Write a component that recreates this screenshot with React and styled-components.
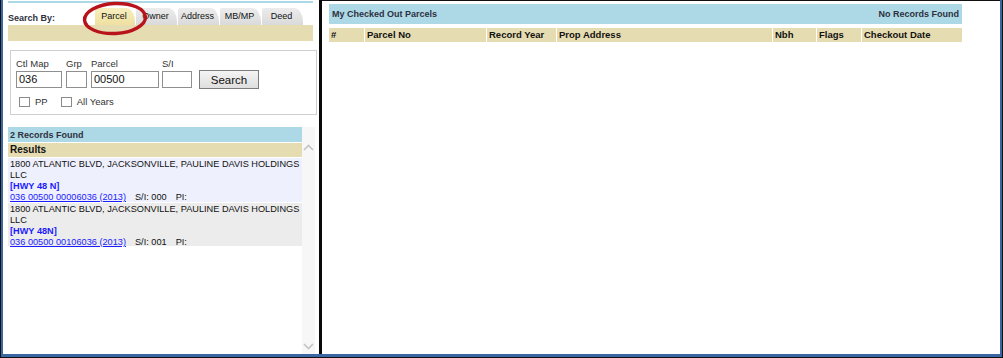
import styled, { createGlobalStyle } from "styled-components";

const GlobalStyle = createGlobalStyle`
  html, body {
    margin: 0;
    padding: 0;
    background: #fff;
  }
  body {
    font-family: "Liberation Sans", Arial, sans-serif;
  }
`;

const Frame = styled.div`
  width: 1003px;
  height: 358px;
  box-sizing: border-box;
  border-left: 1px solid #111;
  border-right: 1px solid #111;
  border-bottom: 1px solid #111;
`;

const Inner = styled.div`
  height: 100%;
  box-sizing: border-box;
  border-left: 2px solid #3b66a4;
  border-right: 2px solid #3b66a4;
  border-bottom: 3px solid #3b66a4;
  display: flex;
`;

const LeftPanel = styled.div`
  width: 316px;
  flex: none;
  box-sizing: border-box;
  padding-left: 5px;
  display: flex;
  flex-direction: column;
  position: relative;
`;

const Divider = styled.div`
  width: 3px;
  flex: none;
  background: #0a0a0a;
`;

const RightPanel = styled.div`
  flex: 1;
  border-top: 1px solid #111;
  padding: 3px 0 0 7px;
`;

const TopLine = styled.div`
  margin-top: 1px;
  width: 305px;
  height: 2px;
  background: #add8e6;
`;

const TabRow = styled.div`
  margin-top: 4px;
  height: 18px;
  width: 305px;
  display: flex;
  align-items: flex-end;
`;

const SearchLabel = styled.div`
  width: 87px;
  font-size: 9px;
  font-weight: bold;
  color: #2e3140;
  padding-bottom: 2px;
`;

const Tab = styled.div`
  width: ${(p) => p.$w}px;
  height: 17px;
  margin-right: 1px;
  box-sizing: border-box;
  border-top-right-radius: 9px 14px;
  border-top-left-radius: 2px;
  font-size: 9px;
  color: #111;
  display: flex;
  justify-content: center;
  align-items: flex-start;
  padding-top: 3px;
  padding-right: 2px;
  background: ${(p) =>
    p.$active
      ? "linear-gradient(#f7efbf, #efe0a0)"
      : "linear-gradient(#ececec, #dadada)"};
`;

const TabBar = styled.div`
  width: 305px;
  height: 16px;
  background: #e6dcb1;
`;

const Highlight = styled.svg`
  position: absolute;
  left: 79px;
  top: 1px;
`;

const FormBox = styled.div`
  margin: 9px 0 0 2px;
  width: 307px;
  height: 65px;
  box-sizing: border-box;
  border: 1px solid #cfcfcf;
  padding: 7px 0 0 5px;
`;

const FieldRow = styled.div`
  display: flex;
  align-items: flex-end;
`;

const Field = styled.div`
  display: flex;
  flex-direction: column;
  margin-right: ${(p) => p.$gap}px;
`;

const FieldLabel = styled.span`
  font-size: 9.5px;
  color: #333;
  height: 13px;
  line-height: 11px;
`;

const TextBox = styled.div`
  width: ${(p) => p.$w}px;
  height: 17px;
  box-sizing: border-box;
  border: 1px solid #8f8f8f;
  font-size: 11px;
  line-height: 15px;
  padding-left: 2px;
  color: #111;
`;

const SearchButton = styled.div`
  width: 60px;
  height: 19px;
  box-sizing: border-box;
  border: 1px solid #7d7d7d;
  background: linear-gradient(#f4f4f4, #dedede);
  font-size: 11.5px;
  color: #111;
  display: flex;
  align-items: center;
  justify-content: center;
  margin-bottom: -1px;
`;

const CheckRow = styled.div`
  display: flex;
  align-items: center;
  margin: 8px 0 0 3px;
  font-size: 9.5px;
  color: #333;
`;

const CheckBox = styled.span`
  width: 11px;
  height: 10px;
  box-sizing: border-box;
  border: 1px solid #8a8a8a;
  background: #fff;
  margin-right: 5px;
`;

const CheckText = styled.span`
  margin-right: ${(p) => p.$gap}px;
`;

const Results = styled.div`
  margin-top: 12px;
  width: 307px;
  flex: 1;
  display: flex;
`;

const ResultList = styled.div`
  width: 294px;
  flex: none;
`;

const Scrollbar = styled.div`
  width: 13px;
  background: #f7f7f7;
  display: flex;
  flex-direction: column;
  justify-content: space-between;
  align-items: center;
  padding: 17px 0 4px;
`;

const BlueHead = styled.div`
  height: ${(p) => p.$h}px;
  background: #add8e6;
  font-size: 9px;
  font-weight: bold;
  color: #2e3140;
  display: flex;
  align-items: center;
  justify-content: space-between;
  padding: 0 ${(p) => p.$pad}px;
`;

const TanHead = styled.div`
  margin-top: 1px;
  height: 14px;
  background: #e6dcb1;
  font-size: 10px;
  font-weight: bold;
  color: #111;
  padding-left: 2px;
  line-height: 14px;
`;

const ResultRow = styled.div`
  margin-top: 1px;
  height: ${(p) => p.$h}px;
  box-sizing: border-box;
  background: ${(p) => p.$bg};
  padding: 1px 2px 0;
  font-size: 9.2px;
  line-height: 10.6px;
  color: #111;
`;

const Street = styled.div`
  color: #1c1cff;
  font-weight: bold;
  margin-top: 1px;
`;

const ParcelLink = styled.a`
  color: #1c1cff;
  text-decoration: underline;
  margin-right: 9px;
`;

const Gap = styled.span`
  margin-right: 9px;
`;

const TableHead = styled.div`
  margin-top: 4px;
  width: 633px;
  display: grid;
  grid-template-columns: 35px 121px 69px 215px 43px 44px 100px;
  column-gap: 1px;
`;

const HeadCell = styled.div`
  height: 14px;
  background: #e6dcb1;
  font-size: 9.5px;
  font-weight: bold;
  color: #111;
  line-height: 14px;
  padding-left: 2px;
`;

const Chevron = ({ up }) => (
  <svg width="11" height="7" viewBox="0 0 11 7">
    <path
      d={up ? "M1 6 L5.5 1.5 L10 6" : "M1 1 L5.5 5.5 L10 1"}
      fill="none"
      stroke="#c4c4c4"
      strokeWidth="1.6"
    />
  </svg>
);

const tabs = [
  { label: "Parcel", w: 40, active: true },
  { label: "Owner", w: 41 },
  { label: "Address", w: 41 },
  { label: "MB/MP", w: 41 },
  { label: "Deed", w: 41 },
];

const results = [
  { street: "[HWY 48 N]", link: "036 00500 00006036 (2013)", si: "000", bg: "#eef0fd", h: 44 },
  { street: "[HWY 48N]", link: "036 00500 00106036 (2013)", si: "001", bg: "#ececec", h: 43 },
];

const columns = ["#", "Parcel No", "Record Year", "Prop Address", "Nbh", "Flags", "Checkout Date"];

const App = () => {
  return (
    <>
      <GlobalStyle />
      <Frame>
        <Inner>
          <LeftPanel>
            <TopLine />
            <TabRow>
              <SearchLabel>Search By:</SearchLabel>
              {tabs.map((t) => (
                <Tab key={t.label} $w={t.w} $active={t.active}>
                  {t.label}
                </Tab>
              ))}
            </TabRow>
            <TabBar />
            <Highlight width="66" height="35" viewBox="0 0 66 35">
              <ellipse
                cx="33"
                cy="17.5"
                rx="30.5"
                ry="15"
                fill="none"
                stroke="#b8121b"
                strokeWidth="3.4"
                transform="rotate(-3 33 17.5)"
              />
            </Highlight>

            <FormBox>
              <FieldRow>
                <Field $gap={4}>
                  <FieldLabel>Ctl Map</FieldLabel>
                  <TextBox $w={46}>036</TextBox>
                </Field>
                <Field $gap={4}>
                  <FieldLabel>Grp</FieldLabel>
                  <TextBox $w={21} />
                </Field>
                <Field $gap={3}>
                  <FieldLabel>Parcel</FieldLabel>
                  <TextBox $w={68}>00500</TextBox>
                </Field>
                <Field $gap={7}>
                  <FieldLabel>S/I</FieldLabel>
                  <TextBox $w={30} />
                </Field>
                <SearchButton>Search</SearchButton>
              </FieldRow>
              <CheckRow>
                <CheckBox />
                <CheckText $gap={13}>PP</CheckText>
                <CheckBox />
                <CheckText $gap={0}>All Years</CheckText>
              </CheckRow>
            </FormBox>

            <Results>
              <ResultList>
                <BlueHead $h={15} $pad={2}>2 Records Found</BlueHead>
                <TanHead>Results</TanHead>
                {results.map((r) => (
                  <ResultRow key={r.link} $bg={r.bg} $h={r.h}>
                    <div>1800 ATLANTIC BLVD, JACKSONVILLE, PAULINE DAVIS HOLDINGS LLC</div>
                    <Street>{r.street}</Street>
                    <div>
                      <ParcelLink href="#">{r.link}</ParcelLink>
                      <Gap>S/I: {r.si}</Gap>
                      PI:
                    </div>
                  </ResultRow>
                ))}
              </ResultList>
              <Scrollbar>
                <Chevron up />
                <Chevron />
              </Scrollbar>
            </Results>
          </LeftPanel>

          <Divider />

          <RightPanel>
            <BlueHead $h={20} $pad={3} style={{ width: 627 }}>
              <span>My Checked Out Parcels</span>
              <span>No Records Found</span>
            </BlueHead>
            <TableHead>
              {columns.map((c) => (
                <HeadCell key={c}>{c}</HeadCell>
              ))}
            </TableHead>
          </RightPanel>
        </Inner>
      </Frame>
    </>
  );
};

export default App;
